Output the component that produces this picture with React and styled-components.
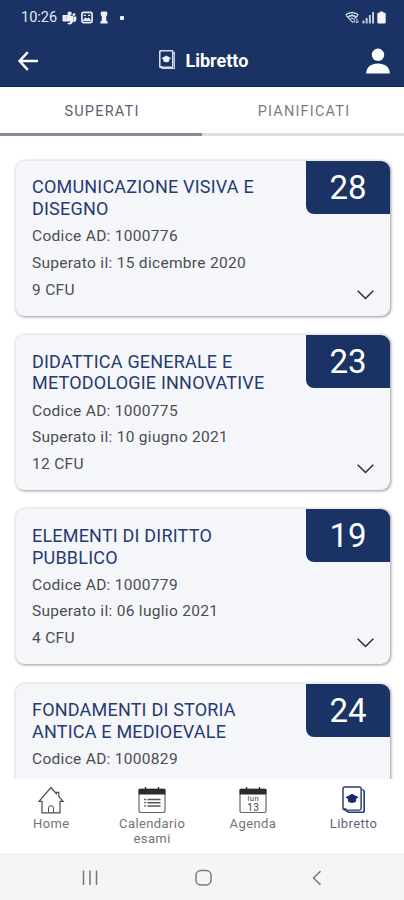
import React from "react";
import styled, { createGlobalStyle } from "styled-components";
import { useState } from "react";

const exams = [
  { id: 1, title: ["COMUNICAZIONE VISIVA E", "DISEGNO"], code: "1000776", date: "15 dicembre 2020", cfu: 9, grade: 28 },
  { id: 2, title: ["DIDATTICA GENERALE E", "METODOLOGIE INNOVATIVE"], code: "1000775", date: "10 giugno 2021", cfu: 12, grade: 23 },
  { id: 3, title: ["ELEMENTI DI DIRITTO", "PUBBLICO"], code: "1000779", date: "06 luglio 2021", cfu: 4, grade: 19 },
  { id: 4, title: ["FONDAMENTI DI STORIA", "ANTICA E MEDIOEVALE"], code: "1000829", grade: 24 },
];

const TeamsIcon = () => (
  <svg width="15" height="14" viewBox="0 0 15 14" fill="#eef1f8">
    <circle cx="7.6" cy="2.6" r="2.1" />
    <circle cx="12" cy="3.6" r="1.4" />
    <rect x="0.5" y="4" width="7.5" height="6.6" rx="0.8" />
    <path d="M8 4.8h3v5.6a3.3 3.3 0 0 1-5.8 1.8l2.8-.8z" />
    <path d="M11.3 5.6h3v3a2.4 2.4 0 0 1-3 2.3z" />
    <path d="M2.6 6h3.4M4.3 6v3.2" stroke="#b9c2d6" strokeWidth="0.9" />
  </svg>
);

const PictureIcon = () => (
  <svg width="12" height="13" viewBox="0 0 11 12" fill="none" stroke="#eef1f8">
    <rect x="0.8" y="1.3" width="9.4" height="9.4" rx="1.4" strokeWidth="1.5" />
    <path d="M2 8.8l2-2.5 1.6 1.3L7 6.300 9 8.800z" fill="#eef1f8" strokeWidth="0.8" />
    <path d="M2.5 4h2M6.5 4h2" strokeWidth="1" />
  </svg>
);

const PawnIcon = () => (
  <svg width="8" height="13" viewBox="0 0 8 13" fill="#eef1f8">
    <path d="M1.7.4h4.600q.9 0 .9.9v2.800L6.200 5.400v4l1.400 1.200v2H.400v-2l1.400-1.200v-4L.8 4.100V1.300q0-.9.9-.9z" />
  </svg>
);

const WifiIcon = () => (
  <svg width="15" height="13" viewBox="0 0 15 13" fill="none" stroke="#d5dbe8" strokeWidth="1.5">
    <path d="M.8 3.800C4.500.6 9.600.6 13.200 3.800M2.900 6.200c2.500-2.200 5.800-2.200 8.300 0" />
    <path d="M1 4.300l7 7.400M13 4.300L9.600 7.600M5.500 7.500q1.600-.9 3 .3" strokeWidth="1.200" />
    <path d="M9.200 7.800v4M12 7.500v4.300M10.600 10.400l1.400 1.500 1.400-1.500" strokeWidth="1" />
  </svg>
);

const SignalIcon = () => (
  <svg width="13" height="13" viewBox="0 0 13 13" fill="#c8d0e0">
    <rect x="0.5" y="9.5" width="1.9" height="3" />
    <rect x="3.7" y="7" width="1.9" height="5.5" />
    <rect x="6.9" y="4" width="1.9" height="8.5" />
    <rect x="10.1" y="1" width="1.9" height="11.5" />
  </svg>
);

const BatteryIcon = () => (
  <svg width="9" height="13" viewBox="0 0 9 13" fill="#f3f5fa">
    <path d="M2.7.5h3.600v1.300h1.200q1.200 0 1.200 1.200v8q0 1.500-1.500 1.500H1.800Q.3 12.500.3 11V3q0-1.200 1.200-1.200h1.200z" />
  </svg>
);

const BackIcon = () => (
  <svg width="22" height="20" viewBox="0 0 22 20" fill="none" stroke="#fff" strokeWidth="2.5">
    <path d="M10.8 1.200L2.600 10l8.200 8.800M2.800 10H21" />
  </svg>
);

const UserIcon = () => (
  <svg width="26" height="26" viewBox="0 0 26 26" fill="#fff">
    <circle cx="13" cy="6.8" r="6.2" />
    <path d="M1.2 25.500c0-6.300 5-9.900 11.800-9.900s11.800 3.600 11.800 9.900z" />
  </svg>
);

const BookIcon = ({ size, cover, ink, line, weight = 1.5 }) => (
  <svg width={size * 0.86} height={size} viewBox="0 0 24 28" fill="none" stroke={line}>
    <path d="M4 25.800l3 1.400h14.500q1.500 0 1.500-1.500V6q0-1.500-2-2.500" strokeWidth={weight + 0.2} />
    <rect x="1" y="1" width="18.8" height="24" rx="1.8" fill={cover} strokeWidth={weight} />
    <path d="M4.300 11.800l6.100-3.200 6.100 3.200-6.100 3.200z" fill={ink} stroke={ink} />
    <path d="M6.700 13v3q3.700 2.300 7.400 0v-3" fill={ink} stroke={ink} />
    <path d="M2 24h2.500" stroke={ink} strokeWidth="1.8" />
  </svg>
);

const ChevronIcon = () => (
  <svg width="17" height="10" viewBox="0 0 17 10" fill="none" stroke="#292c34" strokeWidth="1.5">
    <path d="M.7.8l7.800 7.700L16.300.8" />
  </svg>
);

const HomeIcon = () => (
  <svg width="28" height="28" viewBox="0 0 28 28" fill="none" stroke="#4b4b4b" strokeWidth="1.2">
    <path d="M5 15.300H2L14 1.500l5.300 6.100V6.300h2.500v4.200L26 15.300h-3v11.500H5z" />
    <path d="M11.500 26.500v-4.600q0-2.200 2.500-2.200t2.500 2.200v4.600" strokeWidth="1" />
  </svg>
);

const CalendarFrame = ({ children }) => (
  <svg width="28" height="28" viewBox="0 0 28 28" fill="none" stroke="#666">
    <rect x="1" y="3" width="26" height="23.5" rx="1.4" strokeWidth="1.2" />
    <path d="M.6 3h26.800v5.500H.6z" fill="#2b2b2b" stroke="none" />
    <path d="M7.500 1v3M20.500 1v3" stroke="#2b2b2b" strokeWidth="1.3" />
    {children}
  </svg>
);

const CalendarIcon = () => (
  <CalendarFrame>
    <path d="M6 13.500h2.200M6 16.700h2.200M6 19.900h2.200" strokeWidth="1.3" />
    <path d="M9.500 13.500h13M9.500 16.700h13M9.500 19.900h13" stroke="#555" strokeWidth="1.5" />
  </CalendarFrame>
);

const AgendaIcon = () => (
  <CalendarFrame>
    <CalendarText x="14.3" y="15" $size="7.5">lun</CalendarText>
    <CalendarText x="14.3" y="24.7" $size="10">13</CalendarText>
  </CalendarFrame>
);

const navItems = [
  { label: "Home", icon: <HomeIcon /> },
  { label: "Calendario esami", icon: <CalendarIcon /> },
  { label: "Agenda", icon: <AgendaIcon /> },
  { label: "Libretto", icon: <BookIcon size={27} cover="#fff" ink="#152c66" line="#263b72" />, active: true },
];

const App = () => {
  const [tab, setTab] = useState("superati");

  return (
    <>
      <GlobalStyle />
      <Screen>
        <Header>
          <StatusBar>
            <Clock>10:26</Clock>
            <StatusIcons>
              <TeamsIcon />
              <PictureIcon />
              <PawnIcon />
            </StatusIcons>
            <Dot />
            <StatusRight>
              <WifiIcon />
              <SignalIcon />
              <BatteryIcon />
            </StatusRight>
          </StatusBar>
          <TitleBar>
            <IconButton aria-label="Indietro"><BackIcon /></IconButton>
            <PageTitle>
              <BookIcon size={19.5} cover="none" ink="#f4f6fb" line="#d8deec" weight={2.4} />
              <h1>Libretto</h1>
            </PageTitle>
            <IconButton aria-label="Profilo"><UserIcon /></IconButton>
          </TitleBar>
        </Header>

        <Tabs>
          <Tab $active={tab === "superati"} onClick={() => setTab("superati")}>SUPERATI</Tab>
          <Tab $active={tab === "pianificati"} onClick={() => setTab("pianificati")}>PIANIFICATI</Tab>
        </Tabs>

        <ExamList>
          {exams.map((exam) => (
            <ExamCard key={exam.id}>
              <ExamInfo>
                <h2>{exam.title[0]}<br />{exam.title[1]}</h2>
                <p>Codice AD: {exam.code}</p>
                {exam.date && <p>Superato il: {exam.date}</p>}
                {exam.cfu && <p>{exam.cfu} CFU</p>}
              </ExamInfo>
              <ExamSide>
                <Grade>{exam.grade}</Grade>
                <ChevronIcon />
              </ExamSide>
            </ExamCard>
          ))}
        </ExamList>

        <BottomNav>
          {navItems.map((item) => (
            <NavItem key={item.label} $active={item.active}>
              <NavIcon>{item.icon}</NavIcon>
              <span>{item.label}</span>
            </NavItem>
          ))}
        </BottomNav>

        <SystemBar>
          <svg width="18" height="18" viewBox="0 0 18 18" stroke="#777" strokeWidth="1.5">
            <path d="M2.500 1.500v14.500M9 1.500v14.500M15.500 1.500v14.500" />
          </svg>
          <svg width="18" height="18" viewBox="0 0 18 18" fill="none" stroke="#777" strokeWidth="1.5">
            <rect x="1" y="1.5" width="15" height="14.5" rx="4.8" />
          </svg>
          <svg width="18" height="18" viewBox="0 0 18 18" fill="none" stroke="#777" strokeWidth="1.5">
            <path d="M12.500 2.300L5.500 9l7 6.700" />
          </svg>
        </SystemBar>
      </Screen>
    </>
  );
};

export default App;

const GlobalStyle = createGlobalStyle`
  * {
    box-sizing: border-box;
  }
  body {
    margin: 0;
    font-family: Roboto, "Liberation Sans", sans-serif;
    background-color: #fff;
  }
  h1, h2, p {
    margin: 0;
    font-weight: 400;
  }
  button {
    font-family: inherit;
    border: none;
    background: none;
    padding: 0;
  }
  svg {
    display: block;
    flex-shrink: 0;
  }
`;

const Screen = styled.div`
  width: 404px;
  height: 900px;
  display: flex;
  flex-direction: column;
  overflow: hidden;
`;

const Header = styled.header`
  height: 87px;
  flex-shrink: 0;
  background-color: #1a3364;
  border-bottom: 1px solid #10205c;
  color: #fff;
`;

const StatusBar = styled.div`
  height: 35px;
  padding: 0 18px 0 21px;
  display: flex;
  align-items: center;
`;

const Clock = styled.span`
  font-size: 14.5px;
  color: #e3e7f0;
  width: 40.5px;
`;

const StatusIcons = styled.div`
  display: flex;
  align-items: center;
  gap: 4px;
  svg:last-child {
    margin-left: 3px;
  }
`;

const Dot = styled.span`
  width: 4px;
  height: 4px;
  border-radius: 1px;
  margin-left: 12px;
  background-color: #f3f5fa;
`;

const StatusRight = styled.div`
  display: flex;
  align-items: center;
  gap: 2px;
  margin-left: auto;
`;

const TitleBar = styled.div`
  height: 51px;
  padding: 0 13px 0 17px;
  display: flex;
  align-items: center;
  justify-content: space-between;
`;

const IconButton = styled.button`
  display: flex;
`;

const PageTitle = styled.div`
  display: flex;
  align-items: center;
  gap: 10px;
  padding-left: 3px;
  svg {
    margin-top: -2px;
  }
  h1 {
    font-size: 18px;
    font-weight: 700;
  }
`;

const Tabs = styled.div`
  height: 49px;
  flex-shrink: 0;
  display: flex;
`;

const Tab = styled.button`
  flex: 1;
  padding: 2px 0 0 2px;
  font-size: 14.5px;
  letter-spacing: 1.2px;
  color: ${({ $active }) => ($active ? "#5b6273" : "#7c7c7c")};
  border-bottom: 3px solid ${({ $active }) => ($active ? "#868a99" : "#dfdfdf")};
`;

const ExamList = styled.main`
  flex: 1;
  min-height: 0;
  overflow: hidden;
  padding: 24px 14px 0 15px;
  display: flex;
  flex-direction: column;
  gap: 18.2px;
`;

const ExamCard = styled.article`
  height: 156px;
  flex-shrink: 0;
  display: flex;
  justify-content: space-between;
  background-color: #f4f6fa;
  border-radius: 9px;
  border: 1px solid #e6e8ec;
  border-width: 1px 0 0 1px;
  box-shadow: 1px 1px 3px rgba(0, 0, 0, 0.42);
`;

const ExamInfo = styled.div`
  padding: 15.4px 0 0 16px;
  white-space: nowrap;
  h2 {
    font-size: 18px;
    line-height: 21.8px;
    letter-spacing: 0.2px;
    color: #273a70;
    margin-bottom: 3.4px;
  }
  p {
    font-size: 15.5px;
    line-height: 26.7px;
    letter-spacing: 0.3px;
    color: #4c4d51;
  }
`;

const ExamSide = styled.div`
  display: flex;
  flex-direction: column;
  justify-content: space-between;
  align-items: flex-end;
  padding-bottom: 16px;
  svg {
    margin-right: 16px;
  }
`;

const Grade = styled.div`
  width: 84px;
  height: 53px;
  background-color: #1a3364;
  color: #fff;
  border-radius: 0 9px 0 8px;
  font-size: 33px;
  line-height: 53px;
  text-align: center;
`;

const BottomNav = styled.nav`
  height: 74px;
  flex-shrink: 0;
  display: grid;
  grid-template-columns: repeat(4, 1fr);
  padding: 7px 0 0 1px;
  background-color: #fff;
`;

const NavItem = styled.div`
  display: flex;
  flex-direction: column;
  align-items: center;
  span {
    width: 74px;
    margin-top: 2px;
    text-align: center;
    font-size: 13px;
    line-height: 15px;
    letter-spacing: 0.4px;
    color: ${({ $active }) => ($active ? "#5c6580" : "#747474")};
  }
`;

const NavIcon = styled.div`
  height: 28px;
`;

const CalendarText = styled.text`
  font-family: Roboto, sans-serif;
  font-size: ${({ $size }) => $size}px;
  letter-spacing: 0.5px;
  text-anchor: middle;
  fill: #444;
  stroke: none;
`;

const SystemBar = styled.footer`
  height: 47px;
  flex-shrink: 0;
  display: flex;
  justify-content: space-between;
  align-items: center;
  padding: 2px 78px 0 81px;
  background-color: #f5f5f5;
`;
